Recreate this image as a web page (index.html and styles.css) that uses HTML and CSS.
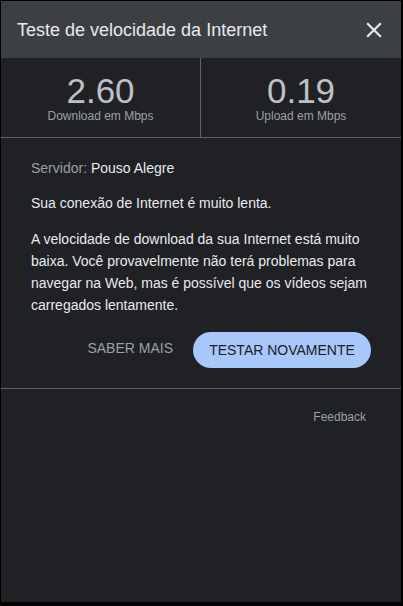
FILE: index.html
```html
<!DOCTYPE html>
<html lang="pt-BR">
<head>
<meta charset="utf-8">
<title>Teste de velocidade da Internet</title>
<link rel="stylesheet" href="styles.css">
</head>
<body>
<div class="panel">
  <header class="header">
    <h1 class="title">Teste de velocidade da Internet</h1>
    <button class="close" aria-label="Fechar">
      <svg viewBox="0 0 24 24" width="26" height="26"><path fill="currentColor" d="M19 6.41L17.59 5 12 10.59 6.41 5 5 6.41 10.59 12 5 17.59 6.41 19 12 13.41 17.59 19 19 17.59 13.41 12z"/></svg>
    </button>
  </header>
  <section class="stats">
    <div class="stat stat-first">
      <div class="stat-value">2.60</div>
      <div class="stat-label">Download em Mbps</div>
    </div>
    <div class="stat">
      <div class="stat-value">0.19</div>
      <div class="stat-label">Upload em Mbps</div>
    </div>
  </section>
  <section class="content">
    <p class="server"><span class="server-label">Servidor:</span> Pouso Alegre</p>
    <p class="summary">Sua conexão de Internet é muito lenta.</p>
    <p class="detail">A velocidade de download da sua Internet está muito baixa. Você provavelmente não terá problemas para navegar na Web, mas é possível que os vídeos sejam carregados lentamente.</p>
    <div class="actions">
      <button class="link-btn">SABER MAIS</button>
      <button class="pill-btn">TESTAR NOVAMENTE</button>
    </div>
  </section>
  <footer class="footer">
    <span class="feedback">Feedback</span>
  </footer>
</div>
</body>
</html>
```

FILE: styles.css
```css
* { box-sizing: border-box; }
html, body { margin: 0; padding: 0; }
body {
  background: #000;
  font-family: "Liberation Sans", Arial, sans-serif;
  width: 403px;
  height: 606px;
  overflow: hidden;
}
.panel {
  margin: 1px 0 0 1px;
  width: 400px;
  height: 601px;
  background: #202124;
  display: flex;
  flex-direction: column;
}
.header {
  height: 57px;
  background: #3c4043;
  display: flex;
  align-items: center;
  justify-content: space-between;
  padding: 0 14px 0 16px;
}
.title {
  margin: 1px 0 0 0;
  font-size: 18px;
  line-height: 24px;
  font-weight: normal;
  color: #e8eaed;
}
.close {
  background: none;
  border: 0;
  padding: 0;
  color: #e8eaed;
  display: flex;
  margin-top: 1px;
}
.stats {
  display: grid;
  grid-template-columns: 1fr 1fr;
  border-bottom: 1px solid #5f6368;
}
.stat {
  text-align: center;
  padding: 15px 0 14px;
}
.stat-first { border-right: 1px solid #5f6368; }
.stat-value {
  font-size: 35px;
  line-height: 36px;
  color: #bdc1c6;
}
.stat-label {
  font-size: 12px;
  line-height: 14px;
  color: #9aa0a6;
}
.content {
  padding: 19px 30px 20px 30px;
  color: #e8eaed;
  font-size: 14px;
  line-height: 22px;
  border-bottom: 1px solid #5f6368;
}
.content p { margin: 0; }
.server-label { color: #9aa0a6; }
.summary { margin-top: 13px !important; }
.detail { margin-top: 14px !important; }
.actions {
  margin-top: 16px;
  display: flex;
  justify-content: flex-end;
  align-items: center;
  gap: 20px;
}
.link-btn {
  background: none;
  border: 0;
  padding: 0;
  margin-bottom: 4px;
  font: inherit;
  font-size: 14px;
  line-height: 22px;
  color: #9aa0a6;
}
.pill-btn {
  height: 36px;
  width: 178px;
  border: 0;
  border-radius: 18px;
  background: #a8c7fa;
  color: #202124;
  font: inherit;
  font-size: 14px;
  line-height: 22px;
  padding: 0;
}
.footer {
  display: flex;
  justify-content: flex-end;
  padding: 21px 35px 0 0;
}
.feedback {
  font-size: 12px;
  line-height: 14px;
  color: #9aa0a6;
}
```
